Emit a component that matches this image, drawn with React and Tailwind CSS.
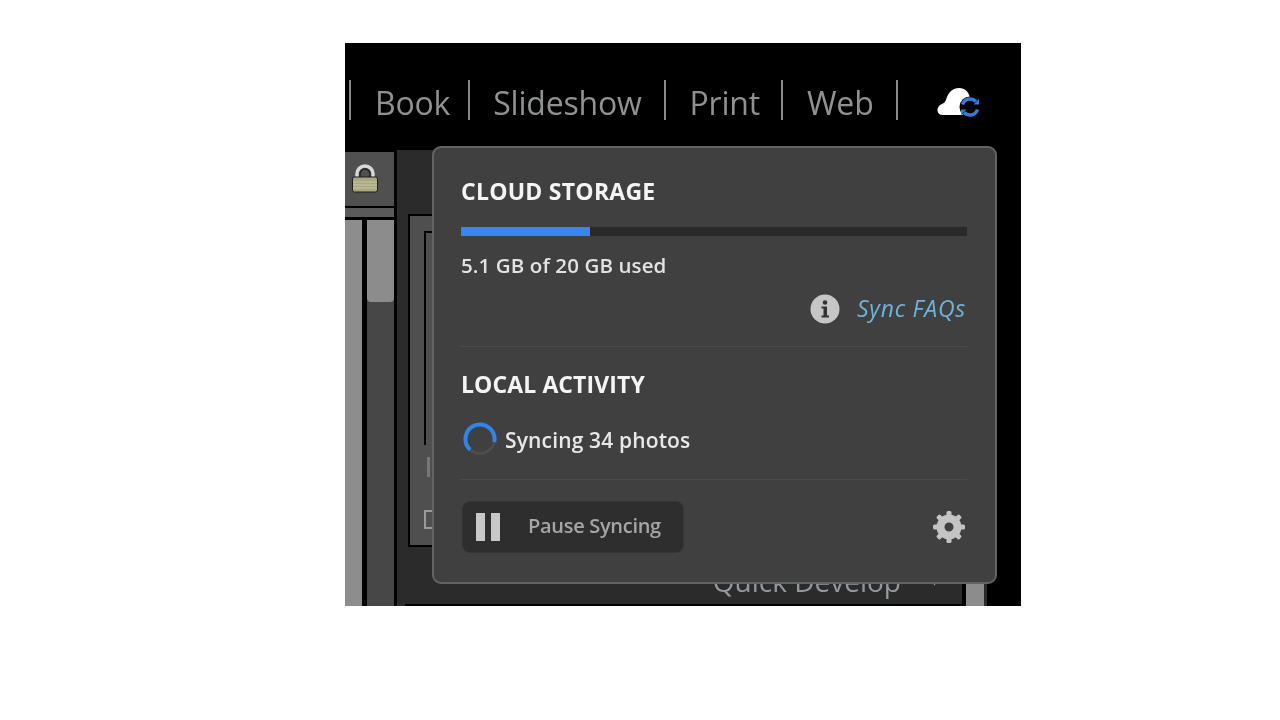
import React from 'react';

const sans = { fontFamily: '"Open Sans", "Noto Sans", sans-serif' };

const modules = [
  { label: 'Book', pl: 'pl-[24px]', pr: 'pr-[18px]' },
  { label: 'Slideshow', pl: 'pl-[23px]', pr: 'pr-[22px]' },
  { label: 'Print', pl: 'pl-[24px]', pr: 'pr-[21px]' },
  { label: 'Web', pl: 'pl-[24px]', pr: 'pr-[22px]' },
];

function CloudSync() {
  return (
    <svg width="44" height="34" viewBox="0 0 44 34">
      <path
        d="M5 28 C-1 28 -1 19 5 17 C7 16 8 15 9 13 C11 5 16 1 22 1 C28 1 32 5 33 11 L38 28 Z"
        fill="#fff"
      />
      <circle cx="33" cy="20" r="10.5" fill="#000" />
      <path d="M25.5 17.5 A8 8 0 0 1 39 14.5" fill="none" stroke="#2f7fd8" strokeWidth="3.5" />
      <path d="M40.5 22.5 A8 8 0 0 1 27 25.5" fill="none" stroke="#2f7fd8" strokeWidth="3.5" />
      <path d="M36.5 17.5 L42 17.5 L42 12 Z" fill="#2f7fd8" />
      <path d="M29.5 22.5 L24 22.5 L24 28 Z" fill="#2f7fd8" />
    </svg>
  );
}

function Lock() {
  return (
    <svg width="28" height="32" viewBox="0 0 28 32">
      <path d="M6 15 V11 A8 8 0 0 1 22 11 V15" fill="none" stroke="#d8d8d8" strokeWidth="3.5" />
      <path d="M9 15 V11 A5 5 0 0 1 19 11 V15" fill="none" stroke="#222" strokeWidth="1.5" />
      <rect x="1.5" y="14" width="25" height="15" rx="2" fill="#a9a77f" stroke="#1d1d1d" strokeWidth="1" />
      <path d="M2 19 H26 M2 22 H26 M2 25 H26" stroke="#c9c7a2" strokeWidth="1" />
    </svg>
  );
}

function InfoIcon() {
  return (
    <svg width="30" height="30" viewBox="0 0 30 30">
      <circle cx="15" cy="15" r="14.5" fill="#c6c6c6" />
      <circle cx="15" cy="8.5" r="2.3" fill="#333" />
      <path d="M11.5 12.5 H17 V21.5 H19 V23.5 H11.5 V21.5 H13.5 V14.5 H11.5 Z" fill="#333" />
    </svg>
  );
}

function Spinner() {
  return (
    <svg width="34" height="34" viewBox="0 0 34 34">
      <circle cx="17" cy="17" r="14.5" fill="none" stroke="#4d4d4d" strokeWidth="3" />
      <path
        d="M7.2 27.7 A14.5 14.5 0 1 1 31.2 20"
        fill="none"
        stroke="#2f86ea"
        strokeWidth="4"
      />
    </svg>
  );
}

function Gear() {
  const teeth = [0, 45, 90, 135, 180, 225, 270, 315];
  return (
    <svg width="34" height="34" viewBox="0 0 34 34">
      {teeth.map((a) => (
        <rect key={a} x="14.5" y="1" width="5" height="8" rx="1.5" fill="#c4c4c4" transform={`rotate(${a} 17 17)`} />
      ))}
      <circle cx="17" cy="17" r="8.5" fill="none" stroke="#c4c4c4" strokeWidth="8" />
    </svg>
  );
}

function Divider() {
  return <div className="h-px bg-[#4c4c4c]" />;
}

function CloudPopover() {
  return (
    <div
      style={sans}
      className="absolute left-[87px] top-[103px] w-[565px] h-[438px] rounded-[9px] border-2 border-[#636363] bg-[#404040] pl-[27px] pr-[28px] flex flex-col"
    >
      <h2 className="mt-[27px] h-[32px] leading-[32px] text-[23px] font-bold text-[#f4f4f4] tracking-[0.25px]">
        CLOUD STORAGE
      </h2>
      <div className="mt-[20px] h-[9px] bg-[#2a2a2a]">
        <div className="h-full w-[129px] bg-[#3a86f0]" />
      </div>
      <p className="mt-[15px] h-[28px] leading-[28px] text-[20.5px] font-semibold text-[#e2e2e2] tracking-[0.1px]">
        5.1 GB of 20 GB used
      </p>
      <div className="mt-[14px] h-[32px] flex items-center justify-end gap-[17px] pr-[1px]">
        <InfoIcon />
        <span className="pb-[2px] text-[23px] font-medium italic text-[#6fb2dc] tracking-[0.75px]">Sync FAQs</span>
      </div>
      <div className="mt-[21px]">
        <Divider />
      </div>
      <h2 className="mt-[21px] h-[32px] leading-[32px] text-[23px] font-bold text-[#f4f4f4] tracking-[0.1px]">
        LOCAL ACTIVITY
      </h2>
      <div className="mt-[22px] h-[34px] flex items-center gap-[8px] pl-[2px]">
        <Spinner />
        <span className="pt-[3px] text-[21px] font-semibold text-[#e8e8e8] tracking-[0.15px]">Syncing 34 photos</span>
      </div>
      <div className="mt-[23px]">
        <Divider />
      </div>
      <div className="mt-[21px] flex items-center justify-between pr-[1px]">
        <button className="w-[222px] h-[52px] ml-[1px] rounded-[8px] border border-[#353535] bg-[#2e2e2e] flex items-center pl-[13px]">
          <span className="flex gap-[6px]">
            <span className="w-[9px] h-[28px] bg-[#c8c8c8]" />
            <span className="w-[9px] h-[28px] bg-[#c8c8c8]" />
          </span>
          <span className="ml-[28px] pb-[2px] text-[20px] font-semibold text-[#a6a6a6] tracking-[-0.3px]">Pause Syncing</span>
        </button>
        <Gear />
      </div>
    </div>
  );
}

export default function App() {
  return (
    <div className="min-h-screen bg-white pt-[43px] pl-[345px]">
      <div className="relative w-[676px] h-[563px] bg-black overflow-hidden blur-[0.5px] flex flex-col">
        {/* module picker */}
        <div style={sans} className="h-[105px] shrink-0 flex items-start pt-[37px] pl-[4px]">
          <div className="h-[40px] border-l-2 border-[#8a8a8a]" />
          {modules.map((m) => (
            <div
              key={m.label}
              className={`h-[40px] pt-[6px] flex items-center border-r-2 border-[#8a8a8a] ${m.pl} ${m.pr} text-[32px] text-[#8f9192] tracking-[-0.2px]`}
            >
              {m.label}
            </div>
          ))}
          <div className="ml-[39px] mt-[7px]">
            <CloudSync />
          </div>
        </div>

        {/* lightroom panels behind */}
        <div className="flex-1 flex min-h-0 pr-[34px]">
          <div className="w-[49px] shrink-0 flex flex-col pt-[4px]">
            <div className="h-[54px] bg-[#505050] flex items-center justify-center pr-[10px]">
              <Lock />
            </div>
            <div className="mt-[2px] h-[9px] bg-[#5a5a5a]" />
            <div className="mt-[3px] flex-1 flex gap-[5px]">
              <div className="w-[17px] bg-[#8d8d8d]" />
              <div className="flex-1 bg-[#474747]">
                <div className="h-[82px] rounded-b-[4px] bg-[#8c8c8c]" />
              </div>
            </div>
          </div>
          <div className="w-[3px] shrink-0 bg-black" />
          <div className="flex-1 flex flex-col bg-[#2b2b2b] mt-[2px] pt-[64px]">
            <div className="ml-[11px] h-[333px] border-t-2 border-l-2 border-b-2 border-black bg-[#4f4f4f] pt-[15px] pl-[14px]">
              <div className="h-[214px] border-l-2 border-t-2 border-black" />
              <div className="ml-[3px] mt-[12px] w-[3px] h-[20px] bg-[#777]" />
              <div className="mt-[33px] w-[10px] h-[19px] border-2 border-[#9a9a9a]" />
            </div>
            <div className="flex-1 ml-[8px] flex flex-col">
              <div style={sans} className="flex-1 flex items-start justify-end pr-[24px] pt-[17px] gap-[30px] text-[28px] text-[#8f9a9e] leading-[34px] border-b-2 border-black">
                <span>Quick Develop</span>
                <span className="text-[14px]">▾</span>
              </div>
            </div>
          </div>
          <div className="w-[4px] shrink-0 bg-black" />
          <div className="w-[18px] shrink-0 bg-[#8c8c8c]" />
          <div className="w-[3px] shrink-0 bg-[#2b2b2b]" />
        </div>

        <CloudPopover />
      </div>
    </div>
  );
}
